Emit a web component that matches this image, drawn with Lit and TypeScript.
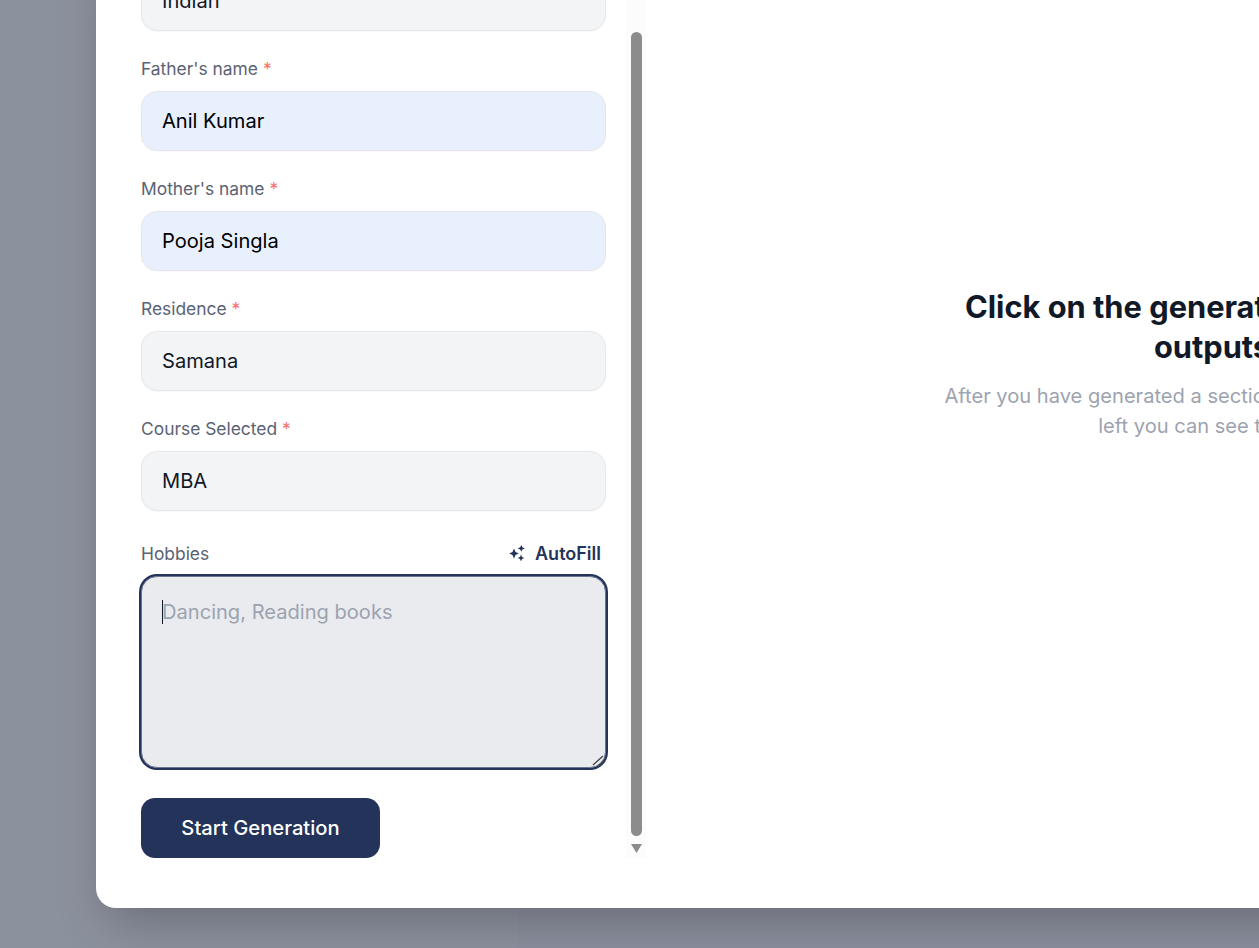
import { LitElement, html, css } from "lit";
import { customElement } from "lit/decorators.js";

@customElement("app-root")
export class AppRoot extends LitElement {
  static styles = css`
    :host {
      display: block;
      height: 948px;
      overflow: hidden;
      font-family: Inter, "Liberation Sans", sans-serif;
    }
    .page {
      height: 948px;
      box-sizing: border-box;
      display: flex;
      align-items: flex-end;
      padding: 0 0 40px 96px;
      overflow: hidden;
      background: linear-gradient(to right, #8c919e 0, #8c919e 518px, #8b8f9d 518px);
    }
    .modal {
      flex: none;
      width: 1637px;
      display: flex;
      background: #fff;
      border-radius: 20px;
      padding: 0 0 50px 45px;
      box-shadow: 0 25px 50px -12px rgba(0, 0, 0, 0.25);
    }
    .form {
      flex: none;
      width: 465px;
      display: flex;
      flex-direction: column;
      gap: 26px;
      margin-right: 20px;
    }
    .field { display: flex; flex-direction: column; gap: 10px; }
    .label {
      font-size: 17.4px;
      line-height: 24px;
      color: #5a6374;
    }
    .req { color: #f87171; }
    .input {
      box-sizing: border-box;
      height: 60px;
      display: flex;
      align-items: center;
      padding: 0 20px 1px;
      border: 1px solid #e5e7eb;
      border-radius: 16px;
      background: #f3f4f6;
      font-size: 20.1px;
      color: #111827;
      box-shadow: 0 1px 2px rgba(0, 0, 0, 0.03);
    }
    .input.filled { background: #e8f0fe; color: #000; }
    .hobbies { margin-top: 4px; gap: 11px; }
    .row { display: flex; justify-content: space-between; align-items: center; height: 24px; }
    .row .label { line-height: 26px; height: 24px; }
    .autofill {
      display: flex;
      align-items: center;
      gap: 10px;
      padding-right: 5px;
      font-size: 18px;
      font-weight: 600;
      color: #233359;
    }
    .area {
      position: relative;
      box-sizing: border-box;
      height: 192px;
      margin-bottom: 4px;
      padding: 20px;
      border: 1px solid #6a7590;
      border-radius: 16px;
      background: #e9ebef;
      box-shadow: 0 0 0 2px #233359;
      font-size: 20.1px;
      line-height: 30px;
      color: #9ca3af;
    }
    .caret {
      display: inline-block;
      width: 1px;
      height: 24px;
      vertical-align: -5px;
      margin-right: -1px;
      background: #111827;
    }
    .grip { position: absolute; right: 0; bottom: 0; width: 15px; height: 15px; }
    .btn {
      align-self: flex-start;
      width: 239px;
      height: 60px;
      padding: 0 0 2px;
      border: 0;
      border-radius: 14px;
      background: #233359;
      color: #fff;
      font: 500 20.2px Inter, "Liberation Sans", sans-serif;
    }
    .track {
      flex: none;
      width: 20px;
      background: #fcfcfc;
      display: flex;
      flex-direction: column;
      justify-content: flex-end;
      align-items: center;
    }
    .thumb {
      width: 11px;
      height: 804px;
      border-radius: 6px;
      background: #8c8c8c;
    }
    .arrow {
      width: 11px;
      height: 9px;
      margin: 8px 0 5px;
      display: block;
    }
    .right {
      flex: 1;
      display: flex;
      flex-direction: column;
      align-items: center;
      text-align: center;
      white-space: nowrap;
    }
    .spacer { height: 350px; flex: none; }
    h2 {
      margin: 0 0 14px;
      font-size: 30.8px;
      line-height: 40px;
      font-weight: 700;
      color: #111827;
    }
    .right p {
      margin: 0;
      font-size: 20.1px;
      line-height: 30px;
      color: #9ca3af;
    }
  `;

  private field(label: string, value: string, filled = false) {
    return html`<div class="field">
      <div class="label">${label} <span class="req">*</span></div>
      <div class="input ${filled ? "filled" : ""}">${value}</div>
    </div>`;
  }

  render() {
    return html`<div class="page">
      <div class="modal">
        <div class="form">
          ${this.field("Nationality", "Indian")}
          ${this.field("Father's name", "Anil Kumar", true)}
          ${this.field("Mother's name", "Pooja Singla", true)}
          ${this.field("Residence", "Samana")}
          ${this.field("Course Selected", "MBA")}
          <div class="field hobbies">
            <div class="row">
              <span class="label">Hobbies</span>
              <span class="autofill">
                <svg width="16" height="16" viewBox="0 0 16 16" fill="currentColor">
                  <path d="M5 3.6 L6.5 7 L9.8 8.5 L6.5 10 L5 13.4 L3.5 10 L.2 8.5 L3.5 7 Z" />
                  <path d="M12.3 0 L13.4 2.3 L15.8 3.4 L13.4 4.5 L12.3 6.8 L11.2 4.5 L8.8 3.4 L11.2 2.3 Z" />
                  <path d="M12 9.6 L13 12 L15.4 13 L13 14 L12 16.4 L11 14 L8.6 13 L11 12 Z" />
                </svg>
                AutoFill
              </span>
            </div>
            <div class="area">
              <span class="caret"></span>Dancing, Reading books
              <svg class="grip" viewBox="0 0 15 15" fill="none" stroke="#4a4a4a" stroke-width="1.4">
                <path d="M3 13 L13 4 M8 14 L14 8.5" />
              </svg>
            </div>
          </div>
          <button class="btn">Start Generation</button>
        </div>
        <div class="track">
          <div class="thumb"></div>
          <svg class="arrow" viewBox="0 0 11 9"><path d="M0 0 H11 L5.5 9 Z" fill="#8c8c8c" /></svg>
        </div>
        <div class="right">
          <div class="spacer"></div>
          <h2>Click on the generated section to<br />outputs</h2>
          <p>After you have generated a section, click on a tab on the<br />left you can see the text</p>
        </div>
      </div>
    </div>`;
  }
}
